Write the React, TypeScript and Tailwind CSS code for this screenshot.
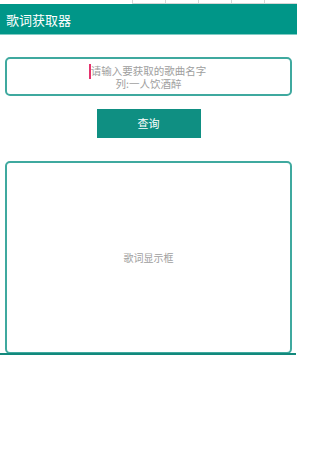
import React from "react";

export default function App() {
  const cells = [0, 1, 2, 3, 4];
  return (
    <div
      className="w-[297px] h-[472px] bg-white overflow-hidden flex flex-col"
      style={{ fontFamily: '"Noto Sans CJK SC", "Noto Sans", sans-serif' }}
    >
      <div className="h-[4px] flex">
        <div className="w-[132px]" />
        {cells.map((c) => (
          <div key={c} className="w-[33px] h-[4px] border-l border-b border-[#d6d6d6] bg-white" />
        ))}
      </div>
      <div className="h-[30px] bg-[#009688] flex items-center px-[6px]">
        <span className="text-white text-[13px] leading-none">歌词获取器</span>
      </div>
      <div className="h-[1px] bg-[#7fcbc3]" />
      <div className="mt-[22px] mx-[5px] h-[39px] border-2 border-[#3fa99f] rounded-[5px] flex items-center justify-center relative">
        <div className="flex flex-col items-center text-[#9e9e9e] text-[10.5px] leading-[13px] relative">
          <span className="absolute left-[-2px] top-[0px] w-[2px] h-[15px] bg-[#e5336e]" />
          <span>请输入要获取的歌曲名字</span>
          <span>列:一人饮酒醉</span>
        </div>
      </div>
      <div className="mt-[13px] flex justify-center">
        <div className="w-[104px] h-[29px] bg-[#0f8f82] flex items-center justify-center text-white text-[11px]">
          查询
        </div>
      </div>
      <div className="mt-[23px] mx-[5px] h-[193px] border-2 border-[#3fa99f] rounded-[5px] flex items-center justify-center">
        <span className="text-[#9e9e9e] text-[10px]">歌词显示框</span>
      </div>
      <div className="h-[2px] bg-[#12897c] -mt-[1px] mr-[1px]" />
    </div>
  );
}
